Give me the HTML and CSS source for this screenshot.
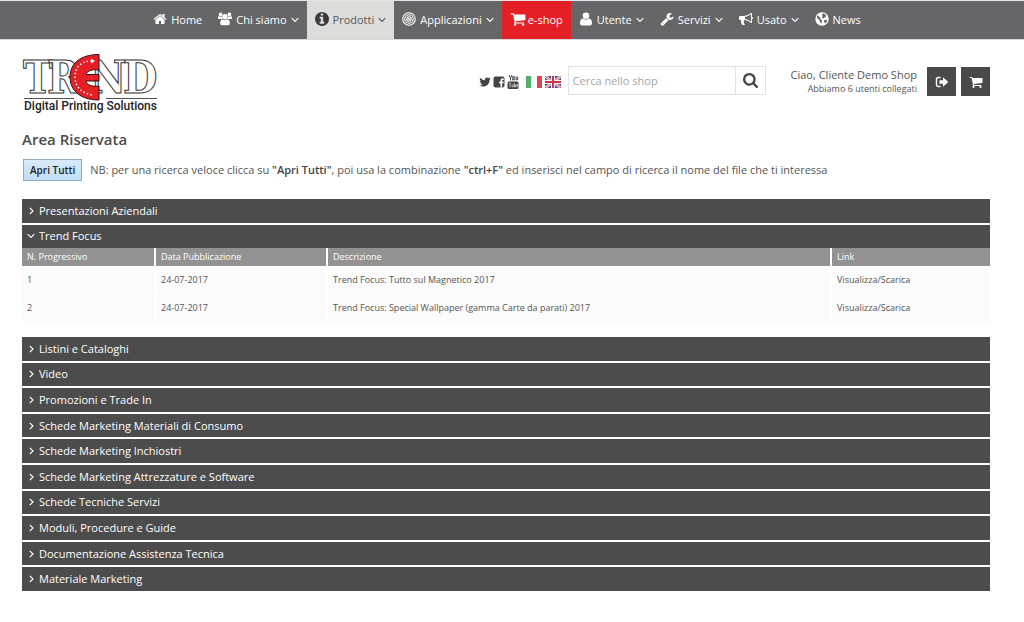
FILE: index.html
```html
<!DOCTYPE html>
<html lang="it">
<head>
<meta charset="utf-8">
<meta name="viewport" content="width=device-width, initial-scale=1">
<title>Area Riservata - Trend</title>
<link rel="stylesheet" href="styles.css">
</head>
<body>
<svg class="sprite" aria-hidden="true">
  <symbol id="down" viewBox="0 0 8 8"><path d="M.7 2.200 4 5.500l3.300-3.300" fill="none" stroke="currentColor" stroke-width="1.100"/></symbol>
  <symbol id="right" viewBox="0 0 8 8"><path d="M2.800.8 6 4 2.800 7.200" fill="none" stroke="currentColor" stroke-width="1.200"/></symbol>
  <symbol id="cart" viewBox="0 0 1792 1792"><path d="M704 1536q0 52-38 90t-90 38-90-38-38-90 38-90 90-38 90 38 38 90zm896 0q0 52-38 90t-90 38-90-38-38-90 38-90 90-38 90 38 38 90zm128-1088v512q0 24-16.500 42.500t-40.500 21.500l-1044 122q13 60 13 70 0 16-24 64h920q26 0 45 19t19 45-19 45-45 19h-1024q-26 0-45-19t-19-45q0-11 8-31.500t16-36 21.500-40 15.500-29.500l-177-823h-204q-26 0-45-19t-19-45 19-45 45-19h256q16 0 28.500 6.500t19.500 15.500 13 24.500 8 26 5.500 29.500 4.500 26h1201q26 0 45 19t19 45z"/></symbol>
</svg>

<nav class="nav" aria-label="Principale">
  <a class="nav-item" href="#"><svg class="icon" viewBox="0 0 1792 1792"><path d="M1472 992v480q0 26-19 45t-45 19h-384v-384h-256v384h-384q-26 0-45-19t-19-45v-480q0-1 .5-3t.5-3l575-474 575 474q1 2 1 6zm223-69l-62 74q-8 9-21 11h-3q-13 0-21-7l-692-577-692 577q-12 8-24 7-13-2-21-11l-62-74q-8-10-7-23.500t11-21.500l719-599q32-26 76-26t76 26l244 204v-195q0-14 9-23t23-9h192q14 0 23 9t9 23v408l219 182q10 8 11 21.500t-7 23.500z"/></svg><span>Home</span></a>
  <a class="nav-item" href="#"><svg class="icon" viewBox="0 0 14 14"><circle cx="2.600" cy="2.500" r="1.900"/><circle cx="11.400" cy="2.500" r="1.900"/><path d="M0 5.300c0-1 .8-1.300 1.500-.9.900.5 1.800.4 2.600 0-.3 1.200 0 2 .5 2.700H1C.4 7.100 0 6.700 0 6zM14 5.300c0-1-.8-1.300-1.500-.9-.9.500-1.800.4-2.600 0 .3 1.200 0 2-.5 2.700H13c.6 0 1-.4 1-1.100z"/><circle cx="7" cy="4.700" r="2.700"/><path d="M4.500 7.200c1.600 1.300 3.400 1.300 5 0 1.700.2 2.300 2 2.300 4 0 1.300-.8 2-1.900 2H4.100c-1.100 0-1.900-.7-1.900-2 0-2 .6-3.800 2.300-4z"/></svg><span>Chi siamo</span><svg class="chev"><use href="#down"/></svg></a>
  <a class="nav-item nav-item--active" href="#"><svg class="icon" viewBox="128 128 1536 1536"><path d="M1152 1376v-160q0-14-9-23t-23-9h-96v-512q0-14-9-23t-23-9h-320q-14 0-23 9t-9 23v160q0 14 9 23t23 9h96v320h-96q-14 0-23 9t-9 23v160q0 14 9 23t23 9h448q14 0 23-9t9-23zm-128-896v-160q0-14-9-23t-23-9h-192q-14 0-23 9t-9 23v160q0 14 9 23t23 9h192q14 0 23-9t9-23zm640 416q0 209-103 385.500t-279.500 279.500-385.500 103-385.500-103-279.500-279.500-103-385.500 103-385.500 279.500-279.500 385.500-103 385.500 103 279.500 279.500 103 385.500z"/></svg><span>Prodotti</span><svg class="chev"><use href="#down"/></svg></a>
  <a class="nav-item" href="#"><svg class="icon" viewBox="0 0 14 14"><g fill="none" stroke="currentColor" stroke-width="1.100"><circle cx="7" cy="7" r="6.300"/><circle cx="7" cy="7" r="4.200"/><circle cx="7" cy="7" r="2.200"/></g><circle cx="7" cy="7" r="1"/></svg><span>Applicazioni</span><svg class="chev"><use href="#down"/></svg></a>
  <a class="nav-item nav-item--shop" href="#"><svg class="icon icon--cart"><use href="#cart"/></svg><span>e-shop</span></a>
  <a class="nav-item" href="#"><svg class="icon" viewBox="0 0 14 14"><circle cx="7" cy="3.800" r="3.300"/><path d="M4 6.600c1.900 1.500 4.100 1.500 6 0 2.300.2 3 2.300 3 4.500 0 1.500-.8 2.300-2 2.300H3c-1.200 0-2-.8-2-2.300 0-2.200.7-4.300 3-4.500z"/></svg><span>Utente</span><svg class="chev"><use href="#down"/></svg></a>
  <a class="nav-item" href="#"><svg class="icon" viewBox="0 0 1792 1792"><path d="M448 1472q0-26-19-45t-45-19-45 19-19 45 19 45 45 19 45-19 19-45zm644-420l-682 682q-37 37-90 37-52 0-91-37l-106-108q-38-36-38-90 0-53 38-91l681-681q39 98 114.500 173.500t173.500 114.500zm634-435q0 39-23 106-47 134-164.500 217.500t-258.500 83.500q-185 0-316.500-131.500t-131.500-316.500 131.500-316.500 316.500-131.500q58 0 121.500 16.500t107.500 46.500q16 11 16 28t-16 28l-293 169v224l193 107q5-3 79-48.500t135.500-81 70.500-35.500q15 0 23.500 10t8.500 25z"/></svg><span>Servizi</span><svg class="chev"><use href="#down"/></svg></a>
  <a class="nav-item" href="#"><svg class="icon" viewBox="0 0 1792 1792"><path d="M1664 640q53 0 90.500 37.500t37.500 90.500-37.500 90.500-90.500 37.500v384q0 52-38 90t-90 38q-417-347-812-380-58 19-91 66t-31 100.500 40 92.500q-20 33-23 65.500t6 58 33.500 55 48 50 61.500 50.500q-29 58-111.500 83t-168.500 11.500-132-55.500q-7-23-29.500-87.500t-32-94.500-23-89-15-101 3.500-98.500 22-110.500h-122q-66 0-113-47t-47-113v-192q0-66 47-113t113-47h480q435 0 896-384 52 0 90 38t38 90v384zm-128 604v-954q-394 302-768 343v270q377 42 768 341z"/></svg><span>Usato</span><svg class="chev"><use href="#down"/></svg></a>
  <a class="nav-item" href="#"><svg class="icon" viewBox="0 0 14 14"><circle cx="7" cy="7" r="6.700"/><path fill="#666668" d="M7.500 1.600l2.300.3 1.600 1.500-1 .4.600 1.200-1.300.2-.9 1.200-1.400-.3-.5-1.200 1-.8-1-1zM2 4l1.400-.5.8 1.400 1.300.8-.6 1.200 1.500.9 1 .9-.8 1.400-.3 1.700-1.400-1.700-.4-2-1.600-1.200-.9-1.600zM9 8.300l2-.5 1.300.7-.8 1.800-1.500 1.300-.8-1.500z"/></svg><span>News</span></a>
</nav>

<header class="header">
  <a class="logo" href="#" aria-label="Trend Digital Printing Solutions">
    <svg class="logo-svg" viewBox="0 0 136 62">
      <g class="logo-letters"><text x="0" y="40">T</text><text x="24" y="40">R</text><text x="67" y="40">N</text><text x="100" y="40">D</text></g>
      <path d="M1 45.500h50M83 45.500h51" stroke="#222" stroke-width=".8"/>
      <path d="M76 1.500v15.500c-7-1-12 1-13 4.500h13v6.500H63c1 4 6 6 13 5v14c-18 0-29-9-29-23S58 1.500 76 1.500z" fill="#e41f26" stroke="#331113" stroke-width="1"/>
      <path d="M69 8C57 8 52 15 52 24s6 17 19 18" fill="none" stroke="#fff" stroke-width="1.500" stroke-dasharray="1.500 2.200"/>
      <path d="M68 5.500l4 2.500-4 2.500z" fill="#fff"/>
      <text class="logo-tag" x="1" y="57">Digital Printing Solutions</text>
    </svg>
  </a>

  <div class="tools">
    <div class="links">
      <a href="#" aria-label="Twitter"><svg class="social" viewBox="60 128 1664 1536"><path d="M1684 408q-67 98-162 167 1 14 1 42 0 130-38 259.500t-115.500 248.500-184.500 210.500-258 146-323 54.500q-271 0-496-145 35 4 78 4 225 0 401-138-105-2-188-64.500t-114-159.500q33 5 61 5 43 0 85-11-112-23-185.500-111.500t-73.500-205.500v-4q68 38 146 41-66-44-105-115t-39-154q0-88 44-163 121 149 294.500 238.500t371.500 99.500q-8-38-8-74 0-134 94.500-228.500t228.500-94.500q140 0 236 102 109-21 205-78-37 115-142 178 93-10 186-50z"/></svg></a>
      <a href="#" aria-label="Facebook"><svg class="social" viewBox="0 0 12 12"><rect x=".5" y=".5" width="11" height="11" rx="2"/><path d="M7.500 11.500V7.300h-1.500V5.700h1.500V4.600c0-1.700.9-2.400 3.200-2.200v1.500c-1.200-.1-1.500.1-1.500.8v1h1.500l-.2 1.600H9.200v4.200z" fill="#fff"/></svg></a>
      <a href="#" aria-label="YouTube"><svg class="social social--tall" viewBox="0 0 12 16"><g fill="none" stroke="currentColor" stroke-width="1"><path d="M2 1l1.500 3v2.500M5 1 3.500 4M9 2.500v3.200h1.700V2.500"/><rect x="5.700" y="2.800" width="1.500" height="3"/></g><rect x=".5" y="7.500" width="11" height="7.500" rx="1.500"/><path d="M1.800 9.300h2.400M3 9.300v4M5 10.300v2.500h1.300v-2.500M7.500 9v4h1v-2.500M10.700 12.800H9.800v-2.300h.9v1H10" fill="none" stroke="#fff" stroke-width=".6"/></svg></a>
      <a class="flag-link" href="#" aria-label="Italiano"><svg class="flag" viewBox="0 0 16 12"><path fill="#4fae68" d="M0 0h5v12H0z"/><path fill="#fafafa" d="M5 0h6v12H5z"/><path fill="#e0444e" d="M11 0h5v12h-5z"/></svg></a>
      <a href="#" aria-label="English"><svg class="flag" viewBox="0 0 16 12"><path fill="#51478c" d="M0 0h16v12H0z"/><path d="M0 0l16 12M16 0 0 12" stroke="#f6eef4" stroke-width="2.600"/><path d="M0 0l16 12M16 0 0 12" stroke="#cf4862" stroke-width=".9"/><path d="M8 0v12M0 6h16" stroke="#f8f1f5" stroke-width="4"/><path d="M8 0v12M0 6h16" stroke="#cb3350" stroke-width="2"/></svg></a>
    </div>
    <form class="search">
      <input class="search-input" type="search" aria-label="Cerca nello shop" placeholder="Cerca nello shop">
      <button class="search-button" type="button" aria-label="Cerca"><svg class="search-icon" viewBox="64 128 1664 1664"><path d="M1216 832q0-185-131.500-316.500t-316.500-131.500-316.500 131.500-131.500 316.500 131.500 316.500 316.500 131.500 316.500-131.500 131.500-316.500zm512 832q0 52-38 90t-90 38q-54 0-90-38l-343-342q-179 124-399 124-143 0-273.500-55.500t-225-150-150-225-55.500-273.500 55.500-273.500 150-225 225-150 273.500-55.500 273.500 55.500 225 150 150 225 55.500 273.500q0 220-124 399l343 343q37 37 37 90z"/></svg></button>
    </form>
    <div class="greeting">
      <span class="greeting-name">Ciao, Cliente Demo Shop</span>
      <span class="greeting-info">Abbiamo 6 utenti collegati</span>
    </div>
    <div class="actions">
      <button class="square" type="button" aria-label="Esci"><svg class="square-icon" viewBox="0 0 14 14"><path d="M5.500 2.500H3.200C2.100 2.500 1.500 3.100 1.500 4.200v5.600c0 1.100.6 1.700 1.700 1.700h2.300" fill="none" stroke="currentColor" stroke-width="1.400"/><path d="M4.500 5.200H8V2.300L13.300 7 8 11.700V8.800H4.500z"/></svg></button>
      <button class="square" type="button" aria-label="Carrello"><svg class="square-icon"><use href="#cart"/></svg></button>
    </div>
  </div>
</header>

<main class="main">
  <h1 class="title">Area Riservata</h1>
  <div class="intro">
    <button class="open-all" type="button">Apri Tutti</button>
    <p class="note">NB: per una ricerca veloce clicca su <b>"Apri Tutti"</b>, poi usa la combinazione <b>"ctrl+F"</b> ed inserisci nel campo di ricerca il nome del file che ti interessa</p>
  </div>

  <div class="accordion accordion--top">
    <button class="bar" type="button" aria-expanded="false"><svg class="chev"><use href="#right"/></svg>Presentazioni Aziendali</button>
    <button class="bar" type="button" aria-expanded="true"><svg class="chev"><use href="#down"/></svg>Trend Focus</button>
  </div>
  <table class="files">
    <colgroup><col class="col-number"><col class="col-date"><col><col class="col-link"></colgroup>
    <thead><tr><th>N. Progressivo</th><th>Data Pubblicazione</th><th>Descrizione</th><th>Link</th></tr></thead>
    <tbody>
      <tr><td>1</td><td>24-07-2017</td><td>Trend Focus: Tutto sul Magnetico 2017</td><td><a href="#">Visualizza/Scarica</a></td></tr>
      <tr><td>2</td><td>24-07-2017</td><td>Trend Focus: Special Wallpaper (gamma Carte da parati) 2017</td><td><a href="#">Visualizza/Scarica</a></td></tr>
    </tbody>
  </table>
  <div class="accordion accordion--rest">
    <button class="bar" type="button" aria-expanded="false"><svg class="chev"><use href="#right"/></svg>Listini e Cataloghi</button>
    <button class="bar" type="button" aria-expanded="false"><svg class="chev"><use href="#right"/></svg>Video</button>
    <button class="bar" type="button" aria-expanded="false"><svg class="chev"><use href="#right"/></svg>Promozioni e Trade In</button>
    <button class="bar" type="button" aria-expanded="false"><svg class="chev"><use href="#right"/></svg>Schede Marketing Materiali di Consumo</button>
    <button class="bar" type="button" aria-expanded="false"><svg class="chev"><use href="#right"/></svg>Schede Marketing Inchiostri</button>
    <button class="bar" type="button" aria-expanded="false"><svg class="chev"><use href="#right"/></svg>Schede Marketing Attrezzature e Software</button>
    <button class="bar" type="button" aria-expanded="false"><svg class="chev"><use href="#right"/></svg>Schede Tecniche Servizi</button>
    <button class="bar" type="button" aria-expanded="false"><svg class="chev"><use href="#right"/></svg>Moduli, Procedure e Guide</button>
    <button class="bar" type="button" aria-expanded="false"><svg class="chev"><use href="#right"/></svg>Documentazione Assistenza Tecnica</button>
    <button class="bar" type="button" aria-expanded="false"><svg class="chev"><use href="#right"/></svg>Materiale Marketing</button>
  </div>
</main>
</body>
</html>
```

FILE: styles.css
```css
* { box-sizing: border-box; }

body {
  margin: 0;
  background: #fff;
  color: #555;
  font-family: "Open Sans", "Noto Sans", sans-serif;
  font-size: 11px;
  line-height: 16px;
}

a { color: inherit; text-decoration: none; }
button, input { margin: 0; font: inherit; color: inherit; border-radius: 0; }
svg { display: block; fill: currentColor; flex: none; }
.sprite { position: absolute; width: 0; height: 0; }

/* Navigation */
.nav {
  display: flex;
  justify-content: center;
  padding-right: 10px;
  border-top: 1px solid #e4e4e4;
  border-bottom: 1px solid #d8d8d8;
  background: #666668;
  color: #fff;
}
.nav-item {
  display: flex;
  align-items: center;
  gap: 4px;
  padding: 10px 8px;
}
.nav-item--active { background: #dcdcdb; color: #58585a; }
.nav-item--active .icon { color: #3a3a3c; }
.nav-item--shop { background: #e41f26; gap: 2px; }
.icon { width: 14px; height: 14px; margin-bottom: 2px; }
.icon--cart { width: 16px; height: 16px; }
.chev { width: 8px; height: 8px; }

/* Header */
.header {
  display: flex;
  align-items: flex-start;
  justify-content: space-between;
  padding: 13px 34px 0 23px;
}
.logo-svg { width: 136px; height: 62px; overflow: visible; }
.logo-letters {
  font: bold 44px "DejaVu Serif Condensed", "Liberation Serif", serif;
  fill: #fff;
  stroke: #333;
  stroke-width: 1px;
}
.logo-tag { font: 500 12px Roboto, sans-serif; fill: #222; }
.tools { display: flex; align-items: center; padding-top: 13px; }
.links { display: flex; align-items: center; gap: 2px; padding-right: 7px; color: #444; }
.social { width: 12px; height: 12px; }
.social--tall { height: 16px; }
.flag { width: 16px; height: 12px; }
.flag-link { padding: 0 1px 0 5px; }
.search { display: flex; width: 198px; margin-bottom: 2px; border: 1px solid #e2e2e2; }
.search-input {
  flex: 1;
  min-width: 0;
  height: 27px;
  padding: 0 4px;
  border: 0;
  background: #fff;
}
.search-input::placeholder { color: #a6a6a6; opacity: 1; }
.search-button {
  display: grid;
  place-items: center;
  width: 30px;
  padding: 0;
  border: 0;
  border-left: 1px solid #e2e2e2;
  background: #fff;
  color: #444;
}
.search-icon { width: 15px; height: 15px; }
.greeting { display: flex; flex-direction: column; padding: 0 10px 0 25px; text-align: right; }
.greeting-name { line-height: 14px; }
.greeting-info { font-size: 9px; line-height: 13px; }
.actions { display: flex; gap: 5px; }
.square {
  display: grid;
  place-items: center;
  width: 29px;
  height: 29px;
  padding: 0;
  border: 0;
  background: #4a4a4b;
  color: #fff;
}
.square-icon { width: 14px; height: 14px; }

/* Content */
.main { padding: 14px 34px 32px 22px; }
.title { margin: 0; color: #4c4c4c; font-size: 15px; font-weight: 600; line-height: 20px; }
.intro { display: flex; align-items: center; gap: 8px; padding: 10px 0 18px 1px; }
.open-all {
  padding: 1px 6px;
  border: 1px solid #8fa9bd;
  background: linear-gradient(#d9ebfa, #c0def5);
  color: #222;
  font-size: 10px;
  line-height: 18px;
  font-weight: 600;
}
.note { margin: 0; }
.note b { font-weight: 600; color: #444; }

.accordion { display: grid; grid-auto-rows: 1fr; gap: 2px; }
.accordion--top { min-height: 49px; }
.accordion--rest { min-height: 254px; margin-top: 15px; }
.bar {
  display: flex;
  align-items: center;
  gap: 4px;
  padding: 0 5px;
  border: 0;
  background: #4c4c4d;
  color: #fff;
  text-align: left;
}

.files {
  width: 100%;
  border-collapse: collapse;
  table-layout: fixed;
  font-size: 9px;
}
.col-number { width: 133px; }
.col-date { width: 172px; }
.col-link { width: 159px; }
.files th {
  height: 18px;
  padding: 0 5px;
  background: #929292;
  color: #fff;
  font-weight: 400;
  text-align: left;
}
.files td { height: 28px; padding: 0 5px; background: #fbfbfb; border-top: 1px solid #fff; }
.files th + th, .files td + td { border-left: 2px solid #fff; }
```
